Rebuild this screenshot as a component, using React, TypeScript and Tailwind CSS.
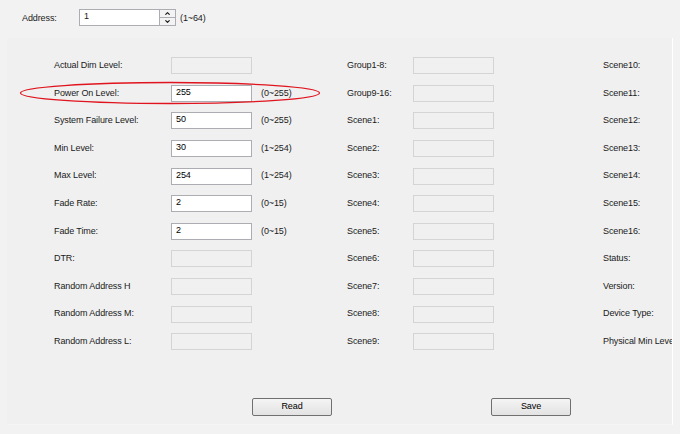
import { ChevronUp, ChevronDown } from "lucide-react";

const leftRows = [
  { label: "Actual Dim Level:", value: "", range: "", enabled: false },
  { label: "Power On Level:", value: "255", range: "(0~255)", enabled: true },
  { label: "System Failure Level:", value: "50", range: "(0~255)", enabled: true },
  { label: "Min Level:", value: "30", range: "(1~254)", enabled: true },
  { label: "Max Level:", value: "254", range: "(1~254)", enabled: true },
  { label: "Fade Rate:", value: "2", range: "(0~15)", enabled: true },
  { label: "Fade Time:", value: "2", range: "(0~15)", enabled: true },
  { label: "DTR:", value: "", range: "", enabled: false },
  { label: "Random Address H", value: "", range: "", enabled: false },
  { label: "Random Address M:", value: "", range: "", enabled: false },
  { label: "Random Address L:", value: "", range: "", enabled: false },
];

const midRows = [
  "Group1-8:",
  "Group9-16:",
  "Scene1:",
  "Scene2:",
  "Scene3:",
  "Scene4:",
  "Scene5:",
  "Scene6:",
  "Scene7:",
  "Scene8:",
  "Scene9:",
];

const rightRows = [
  "Scene10:",
  "Scene11:",
  "Scene12:",
  "Scene13:",
  "Scene14:",
  "Scene15:",
  "Scene16:",
  "Status:",
  "Version:",
  "Device Type:",
  "Physical Min Level:",
];

const Field = ({ value, enabled }: { value: string; enabled: boolean }) => (
  <div
    className={
      enabled
        ? "h-[17px] w-[81px] shrink-0 border border-[#abadb3] bg-white pl-[4px] leading-[13px] text-black"
        : "h-[17px] w-[81px] shrink-0 border border-[#d4d4d4] bg-[#f0f0f0]"
    }
  >
    {value}
  </div>
);

const Button = ({ label }: { label: string }) => (
  <button className="flex h-[18px] w-[80px] items-center justify-center rounded-[2px] border border-[#707070] bg-gradient-to-b from-[#f4f4f4] to-[#e3e3e3] text-black">
    {label}
  </button>
);

export default function App() {
  return (
    <div
      className="relative flex h-[434px] w-[680px] flex-col overflow-hidden bg-[#f2f2f2] text-[9px] tracking-[-0.1px] text-[#1a1a1a]"
      style={{ fontFamily: '"Liberation Sans", Arial, sans-serif' }}
    >
      {/* Address */}

      <div className="flex h-[38px] items-start pt-[9px]">
        <span className="ml-[22px] mt-[3px] w-[57px]">Address:</span>
        <div className="h-[17px] w-[81px] border border-[#abadb3] bg-white pl-[4px] leading-[13px]">1</div>
        <div className="flex h-[17px] w-[16px] flex-col border border-l-0 border-[#abadb3] bg-[#f3f3f3]">
          <div className="flex flex-1 items-center justify-center border-b border-[#abadb3]">
            <ChevronUp size={7} strokeWidth={4} />
          </div>
          <div className="flex flex-1 items-center justify-center">
            <ChevronDown size={7} strokeWidth={4} />
          </div>
        </div>
        <span className="ml-[4px] mt-[3px]">(1~64)</span>
      </div>

      {/* Panel */}

      <div className="ml-[7px] flex h-[387px] w-[666px] flex-col overflow-hidden border-r border-b border-r-white border-b-[#f5f5f5] bg-[#f0f0f0]">
        <div className="flex pt-[14px]">
          <div className="ml-[47px] flex w-[246px] shrink-0 flex-col">
            {leftRows.map((r) => (
              <div key={r.label} className="flex h-[27.6px] items-center">
                <span className="w-[117px] shrink-0">{r.label}</span>
                <Field value={r.value} enabled={r.enabled} />
                <span className="ml-[9px]">{r.range}</span>
              </div>
            ))}
          </div>

          <div className="ml-[47px] flex w-[256px] shrink-0 flex-col">
            {midRows.map((l) => (
              <div key={l} className="flex h-[27.6px] items-center">
                <span className="w-[66px] shrink-0">{l}</span>
                <Field value="" enabled={false} />
              </div>
            ))}
          </div>

          <div className="flex shrink-0 flex-col">
            {rightRows.map((l) => (
              <div key={l} className="flex h-[27.6px] items-center whitespace-nowrap">
                <span>{l}</span>
              </div>
            ))}
          </div>
        </div>

        {/* Buttons */}

        <div className="mt-[42px] flex">
          <div className="ml-[245px]">
            <Button label="Read" />
          </div>
          <div className="ml-[159px]">
            <Button label="Save" />
          </div>
        </div>
      </div>

      {/* Highlight */}

      <svg className="pointer-events-none absolute left-[19px] top-[81px]" width="302" height="24">
        <ellipse cx="151" cy="12" rx="149.5" ry="10.5" fill="none" stroke="#e0141e" strokeWidth="1.3" />
      </svg>
    </div>
  );
}
